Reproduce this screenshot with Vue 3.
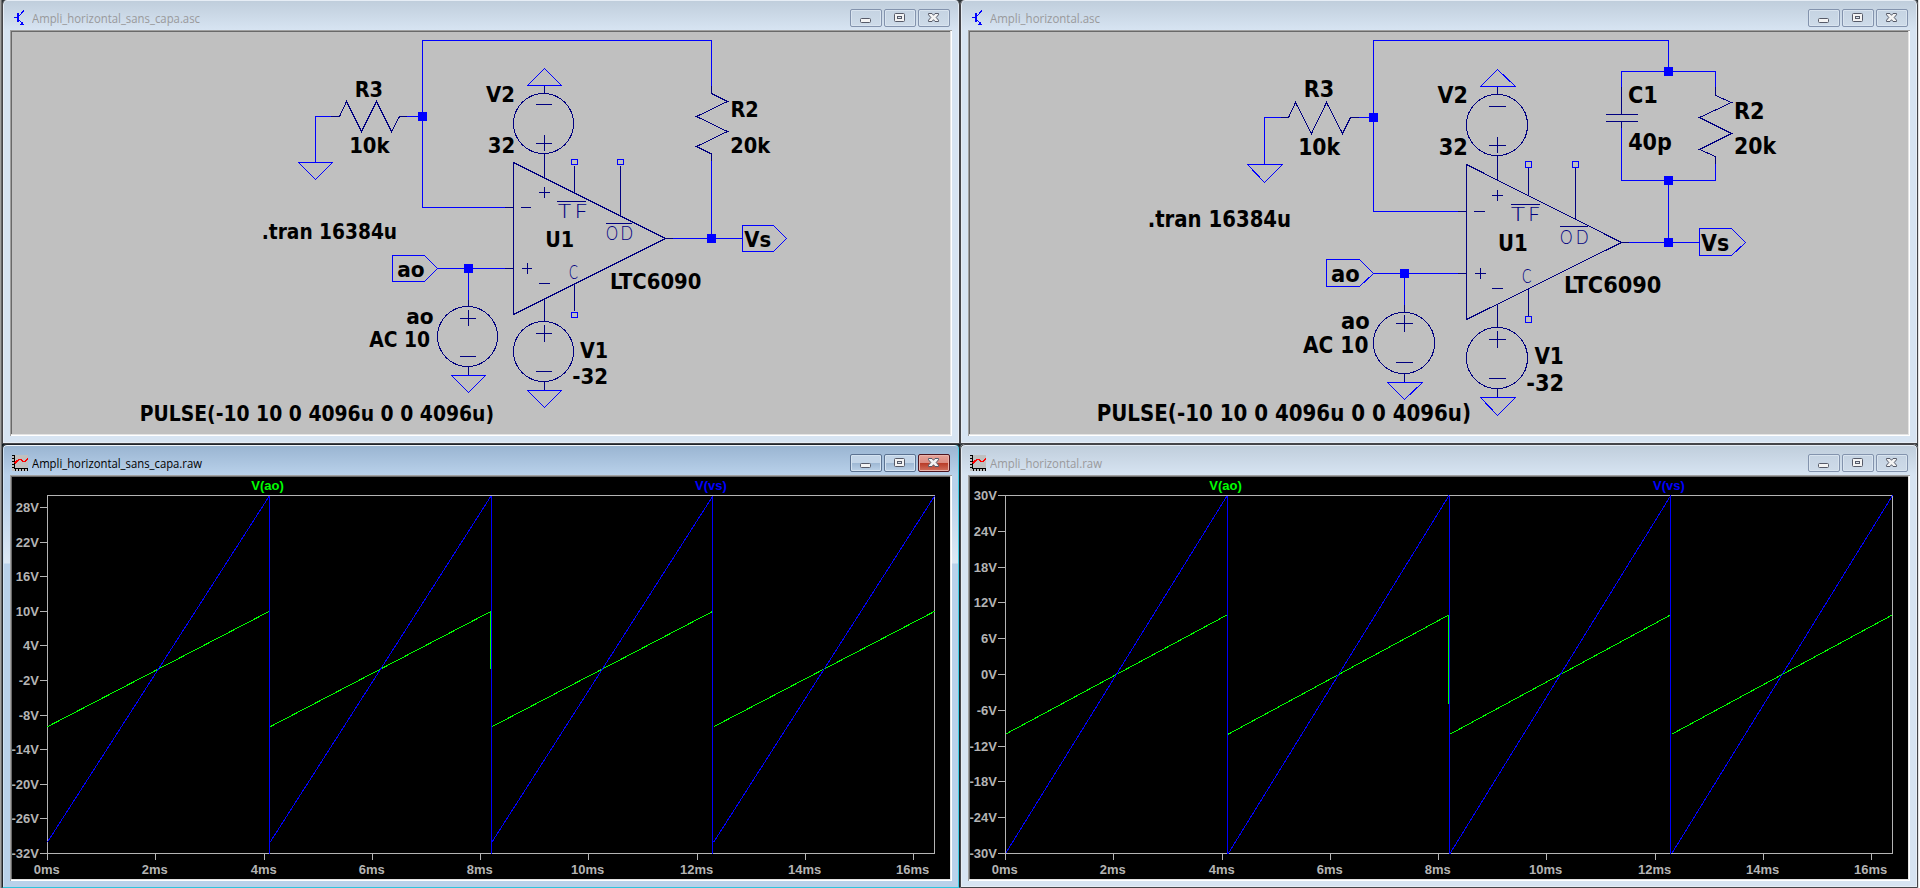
<script setup>
const symL = {
  viewBox: '12 32 938 402',
  size: 22,
  wires: [
    'M422.5 40.5H711.5V86', 'M422.5 40V207.5H505', 'M407 116.5H422', 'M315.5 162V116.5H331',
    'M711.5 161V238.5', 'M673 238.5H742', 'M437 268.5H505', 'M468.5 268V300',
    'M298.5 162.5H332.5L315.5 179.5Z', 'M527.5 85.5H561.5L544.5 68.5Z',
    'M527.5 390.5H561.5L544.5 407.5Z', 'M451.5 375.5H485.5L468.5 392.5Z',
    'M392.5 255.5H424.5L437.5 268.5L424.5 281.5H392.5Z',
    'M742.5 225.5H773.5L786.5 238.5L773.5 251.5H742.5Z',
    'M571.5 159.5h6v5h-6z', 'M617.5 159.5h6v5h-6z', 'M571.5 312.5h6v5h-6z',
  ],
  parts: [
    'M331 116.5H339.5L346.5 101.5L361.5 131.5L376.5 101.5L391.5 131.5L399.5 116.5H407',
    'M711.5 86V93.5L727.5 101.5L696.5 116.5L727.5 131.5L696.5 146.5L711.5 154V161',
    'M505 207.5H513', 'M505 268.5H513', 'M665 238.5H673', 'M468.5 300V306',
    'M513.5 162.5V314.5L665.5 238.5Z',
    'M544.5 86V93M544.5 154V178M536 104.5H552M536 143.5H552M544.5 135V151',
    'M539 192.5H550M544.5 187V198M521 207.5H531M522 268.5H532M527.5 263V274M539 283.5H550',
    'M544.5 299V322M536 333.5H552M544.5 325V342M536 371.5H552M544.5 382V390',
    'M460 318.5H476M468.5 310V326M460 356.5H476M468.5 367V375',
    'M574.5 166V192M620.5 166V215M574.5 284V311', 'M557 201.5H586M606 223.5H632',
  ],
  circles: [[543.5, 123.5], [543.5, 351.5], [467.5, 336.5]],
  radius: 30,
  nodes: [[422, 116], [711, 238], [468, 268]],
  pins: [
    ['T', 558, 218, 13], ['F', 575, 218, 12], ['O', 606, 239.5, 12], ['D', 620.5, 239.5, 12.5], ['C', 569, 278.5, 9],
  ],
  labels: [
    ['R3', 356, 97, 26], ['10k', 350.5, 153, 38], ['.tran 16384u', 263, 239, 133],
    ['ao', 398.5, 277, 25], ['ao', 407.5, 324, 25], ['AC 10', 370.5, 347, 58.5],
    ['PULSE(-10 10 0 4096u 0 0 4096u)', 141, 421, 352], ['V2', 487.3, 101.5, 26.5], ['32', 489, 153, 25],
    ['R2', 731.7, 117, 26], ['20k', 731.5, 152.5, 37.5], ['U1', 546.5, 246.5, 26.5], ['Vs', 745.5, 246.5, 24.5],
    ['LTC6090', 611.3, 289, 89], ['V1', 581.3, 358, 25.7], ['-32', 573.5, 384, 33.5],
  ],
}
const symR = {
  viewBox: '970 32 938 402',
  size: 22.5,
  wires: [
    'M1373.5 40.5H1668.5V71', 'M1373.5 40V211.5H1458', 'M1359 117.5H1373', 'M1264.5 164V117.5H1281',
    'M1621.5 87V71.5H1715.5V87', 'M1621.5 128V180.5H1715.5V164', 'M1668.5 180V242',
    'M1629 242.5H1699', 'M1373 273.5H1458', 'M1404.5 273V305',
    'M1247.5 164.5H1282.5L1264.5 182.5Z', 'M1480.5 86.5H1515.5L1497.5 69.5Z',
    'M1480.5 397.5H1515.5L1497.5 415.5Z', 'M1387.5 382.5H1422.5L1404.5 399.5Z',
    'M1326.5 259.5H1359.5L1373.5 273.5L1359.5 286.5H1326.5Z',
    'M1699.5 228.5H1731.5L1745.5 242.5L1731.5 255.5H1699.5Z',
    'M1525.5 161.5h6v6h-6z', 'M1572.5 161.5h6v6h-6z', 'M1525.5 316.5h6v6h-6z',
  ],
  parts: [
    'M1281 117.5H1288.5L1295.5 102.5L1311.5 133.5L1326.5 102.5L1342.5 133.5L1350.5 117.5H1359',
    'M1715.5 87V95.5L1731.5 102.5L1699.5 117.5L1731.5 133.5L1699.5 149.5L1715.5 156.5V164',
    'M1621.5 87V114M1606 114.5H1638M1606 121.5H1638M1621.5 121V128',
    'M1458 211.5H1466', 'M1458 273.5H1466', 'M1621 242.5H1629', 'M1404.5 305V312',
    'M1466.5 164.5V319.5L1621.5 242.5Z',
    'M1497.5 87V94M1497.5 156V180M1489 106.5H1506M1489 145.5H1506M1497.5 137V153',
    'M1492 195.5H1503M1497.5 190V201M1474 211.5H1485M1475 273.5H1486M1480.5 268V279M1492 288.5H1503',
    'M1497.5 304V327M1489 339.5H1506M1497.5 331V348M1489 378.5H1506M1497.5 389V397',
    'M1396 323.5H1413M1404.5 315V332M1396 362.5H1413M1404.5 374V382',
    'M1528.5 168V195M1575.5 168V219M1528.5 289V316', 'M1511 204.5H1540M1560 226.5H1588',
  ],
  circles: [[1497, 125], [1497, 358], [1404, 343]],
  radius: 30.6,
  nodes: [[1373, 117], [1668, 71], [1668, 180], [1668, 242], [1404, 273]],
  pins: [
    ['T', 1511, 221, 14], ['F', 1528.5, 221, 11], ['O', 1560, 243.5, 12.5], ['D', 1576, 243.5, 12.5], ['C', 1522, 283, 9.5],
  ],
  labels: [
    ['R3', 1305, 97, 28], ['10k', 1299.5, 155, 39.5], ['.tran 16384u', 1149, 227, 141],
    ['ao', 1332.3, 282, 26.3], ['ao', 1342.3, 329, 26.3], ['AC 10', 1304.3, 353, 63],
    ['PULSE(-10 10 0 4096u 0 0 4096u)', 1098, 421, 372], ['V2', 1438.7, 102.5, 28], ['32', 1440, 155, 26.7],
    ['U1', 1499.3, 250.5, 27.3], ['V1', 1535.7, 363.7, 27], ['-32', 1527.5, 390.5, 35.5],
    ['C1', 1629.3, 102.7, 27.5], ['40p', 1629.5, 150, 41.3], ['R2', 1735.3, 118.7, 28.3], ['20k', 1735.3, 154, 39.7],
    ['Vs', 1702.3, 250.5, 25.7], ['LTC6090', 1565.3, 293, 95],
  ],
}

const range = (n) => Array.from({ length: n }, (_, i) => i)

function plot(x0, vTop, vBottom, firstTick, count, greenDrop) {
  const top = 495.5, bottom = 853.5
  const x = (ms) => x0 + ms * 54.14
  const y = (v) => Math.max(top, bottom - ((v - vBottom) / (vTop - vBottom)) * (bottom - top))
  const T = 4.096
  const ramp = (amp, k) =>
    `M${x(k * T) + (k ? 1 : 0)} ${y(-amp)}L${x((k + 1) * T)} ${y(amp)}`
  return {
    x0,
    viewBox: `${x0 - 35.5} 477 938 402`,
    yTicks: range(count).map((i) => ({ text: `${firstTick - 6 * i}V`, y: Math.floor(y(firstTick - 6 * i)) + 0.5 })),
    xTicks: range(9).map((i) => ({ text: `${2 * i}ms`, x: Math.floor(x(2 * i)) + 0.5 })),
    green: range(4).map((k) => ramp(10, k)).join('') + `M${x(2 * T) - 1} ${y(10)}L${x(2 * T) - 0.3} ${greenDrop}`,
    blue: range(4).map((k) => ramp(30, k)).join('') +
      [1, 2, 3].map((k) => `M${Math.floor(x(k * T)) + 0.5} ${top}V${bottom}`).join(''),
  }
}

const windows = [
  { title: 'Ampli_horizontal_sans_capa.asc', len: 168, sym: symL },
  { title: 'Ampli_horizontal.asc', len: 110, sym: symR },
  { title: 'Ampli_horizontal_sans_capa.raw', len: 170, active: true, lower: true, plot: plot(47.5, 30.1, -32, 28, 11, 669) },
  { title: 'Ampli_horizontal.raw', len: 112, lower: true, plot: plot(1005.5, 30, -30, 30, 11, 704) },
]
</script>

<template>
  <main class="desktop">
    <section
      v-for="w in windows"
      :key="w.title"
      class="window"
      :class="{ active: w.active, lower: w.lower }"
    >
      <header class="titlebar">
        <svg v-if="w.sym" class="app-icon" width="16" height="16" viewBox="0 0 16 16" shape-rendering="crispEdges">
          <path d="M2 7.5H6M6.5 6.5L12 .5M6.5 9.5L12 15" stroke="#00f" fill="none" />
          <path d="M5 3h2v9H5zM12 15.5l-4-1 2.5-3z" fill="#00f" />
        </svg>
        <svg v-else class="app-icon" width="16" height="16" viewBox="0 0 16 16" shape-rendering="crispEdges">
          <rect width="16" height="16" fill="#c0c0c0" />
          <path d="M2.5 0V14M2 13.5H16M0 .5H2M0 3.5H2M0 6.5H2M0 9.5H2M0 12.5H2M3.5 14V16M6.5 14V16M9.5 14V16M12.5 14V16M15.5 14V16" stroke="#000" />
          <path d="M2.5 8.500L5 6L7 4.500H9L11 6.500H13L16 3.500" stroke="#f00" stroke-width="1.6" fill="none" />
        </svg>
        <svg class="title" width="240" height="20">
          <text x="0" y="14" :textLength="w.len" lengthAdjust="spacingAndGlyphs">{{ w.title }}</text>
        </svg>
        <div class="buttons">
          <span class="btn">
            <svg width="30" height="16"><rect x="9.500" y="8.500" width="10" height="4" rx="1" class="glyph" /></svg>
          </span>
          <span class="btn">
            <svg width="30" height="16">
              <rect x="9.500" y="3.500" width="10" height="8" rx="1" class="glyph" />
              <rect x="12.500" y="6.500" width="4" height="2" class="hole" />
            </svg>
          </span>
          <span class="btn close">
            <svg width="30" height="16">
              <path class="glyph" d="M9.500 3.500H13L14.500 5.300L16 3.500H19.500V4.800L17.200 7.500L19.500 10.200V11.500H16L14.500 9.700L13 11.500H9.500V10.200L11.800 7.500L9.500 4.800Z" />
            </svg>
          </span>
        </div>
      </header>

      <div class="client">
        <svg v-if="w.sym" class="sheet" width="938" height="402" :viewBox="w.sym.viewBox">
          <g class="lines">
            <path v-for="d in w.sym.parts" :key="d" :d="d" stroke="#000080" />
            <circle v-for="c in w.sym.circles" :key="c.join()" :cx="c[0]" :cy="c[1]" :r="w.sym.radius" stroke="#000080" />
            <path v-for="d in w.sym.wires" :key="d" :d="d" stroke="#0000ff" />
            <rect v-for="n in w.sym.nodes" :key="n.join()" :x="n[0] - 4" :y="n[1] - 4" width="9" height="9" fill="#0000ff" />
          </g>
          <text
            v-for="p in w.sym.pins" :key="p.join()" class="pin" :x="p[1]" :y="p[2]"
            :textLength="p[3]" lengthAdjust="spacingAndGlyphs"
          >{{ p[0] }}</text>
          <text
            v-for="l in w.sym.labels" :key="l.join()" class="label" :font-size="w.sym.size"
            :x="l[1] - 1.3" :y="l[2]" :textLength="l[3] + 2.4" lengthAdjust="spacingAndGlyphs"
          >{{ l[0] }}</text>
        </svg>

        <svg v-else class="graph" width="938" height="402" :viewBox="w.plot.viewBox">
          <g class="lines" stroke="#b4b4b4">
            <rect :x="w.plot.x0" y="495.5" width="887" height="358" />
            <path v-for="t in w.plot.yTicks" :key="t.text" :d="`M${w.plot.x0 - 7.5} ${t.y}h7`" />
            <path v-for="t in w.plot.xTicks" :key="t.text" :d="`M${t.x} 854v6`" />
            <path :d="w.plot.green" stroke="#00ff00" />
            <path :d="w.plot.blue" stroke="#0000ff" />
          </g>
          <text v-for="t in w.plot.yTicks" :key="t.text" class="tick" :x="w.plot.x0 - 8.5" :y="t.y + 4.500" text-anchor="end">{{ t.text }}</text>
          <text v-for="t in w.plot.xTicks" :key="t.text" class="tick" :x="t.x - 0.8" y="874" text-anchor="middle">{{ t.text }}</text>
          <text class="trace" :x="w.plot.x0 + 220" y="490" text-anchor="middle" fill="#00ff00">V(ao)</text>
          <text class="trace" :x="w.plot.x0 + 663.5" y="490" text-anchor="middle" fill="#0000ff">V(vs)</text>
        </svg>
      </div>
    </section>
  </main>
</template>

<style>
body {
  margin: 0;
  overflow: hidden;
}
</style>

<style scoped>
.desktop {
  box-sizing: border-box;
  width: 1920px;
  height: 888px;
  display: grid;
  grid-template-columns: 958px 958px;
  grid-template-rows: 444px 444px;
  padding: 0 1px;
  border-left: 1px solid #a0a0a0;
  border-right: 1px solid #ffffff;
  background: linear-gradient(90deg, #696969 0 50%, #e3e3e3 50%);
}
.window {
  box-sizing: border-box;
  display: flex;
  flex-direction: column;
  border: 1px solid #454549;
  border-top: 0;
  border-radius: 5px 5px 0 0;
  padding: 0 7px;
  background: linear-gradient(#bfcddb, #d7e4f2 30px);
  box-shadow: inset 0 0 0 1px #e6edf5, 0 0 0 5px #30363a;
  clip-path: inset(0);
}
.window.lower {
  border-top: 1px solid #454549;
}
.window.active {
  border-color: #20242a;
  border-bottom-color: #2fc4dc;
  background:
    linear-gradient(#b9d1ea00 45px, #dce8f4 118px, #b9d1ea 119px) no-repeat,
    linear-gradient(#99b4d1, #b9d1ea 30px);
  box-shadow: inset -1px 0 0 #43cfe6, inset 0 1px 0 #f2f6fb, inset 1px 0 0 #cfe2f3, 0 0 0 5px #101a20;
}
.titlebar {
  display: flex;
  height: 30px;
  flex: none;
}
.app-icon {
  margin: 10px 0 0 2px;
}
.title {
  margin: 9px 0 0 4px;
  font-family: "Open Sans", "Noto Sans", sans-serif;
  font-size: 12px;
  fill: #99999b;
}
.active .title {
  fill: #000;
}
.buttons {
  display: flex;
  gap: 2px;
  margin: 9px 2px 0 auto;
}
.btn {
  box-sizing: border-box;
  width: 32px;
  height: 18px;
  border: 1px solid #8393ad;
  border-radius: 2px;
  background: linear-gradient(#c5d3e2, #cedbe9);
  box-shadow: inset 0 0 0 1px #d9e4ef;
}
.btn svg {
  display: block;
}
.glyph {
  fill: #f4f4f4;
  stroke: #565a68;
}
.hole {
  fill: #dbe4ee;
  stroke: #565a68;
}
.active .btn {
  border-color: #5b7291;
  background: linear-gradient(#c3d5e8 0 48%, #9db7d3 50%, #bcd2e8);
  box-shadow: inset 0 0 0 1px #d4e3f1;
}
.active .btn.close {
  border-color: #4d1520;
  background: linear-gradient(#e5a399 0, #dc8b80 48%, #b83a26 50%, #d0705e);
  box-shadow: inset 0 0 0 1px #eab4aa;
}
.client {
  width: 938px;
  height: 402px;
  border: 2px solid;
  border-color: #696969 #fff #fff #696969;
  box-shadow: inset 0 0 0 0 #000;
  outline: 0;
  position: relative;
}
.client::before {
  content: "";
  position: absolute;
  inset: -2px;
  border-top: 1px solid #a0a0a0;
  border-left: 1px solid #a0a0a0;
  pointer-events: none;
}
.client::after {
  content: "";
  position: absolute;
  inset: -1px;
  border-right: 1px solid #e3e3e3;
  border-bottom: 1px solid #e3e3e3;
  pointer-events: none;
}
.sheet,
.graph {
  display: block;
}
.sheet {
  background: #c0c0c0;
}
.graph {
  background: #000;
}
.lines {
  fill: none;
  shape-rendering: crispEdges;
}
.label {
  font-family: "DejaVu Sans Condensed", "DejaVu Sans", sans-serif;
  font-weight: bold;
  fill: #000;
}
.pin {
  font-family: Lato, Roboto, sans-serif;
  font-weight: 300;
  font-size: 20.5px;
  fill: #000080;
}
.tick,
.trace {
  font-family: "Liberation Sans", Arial, sans-serif;
  font-weight: bold;
  font-size: 13px;
}
.tick {
  fill: #b4b4b4;
}
</style>
